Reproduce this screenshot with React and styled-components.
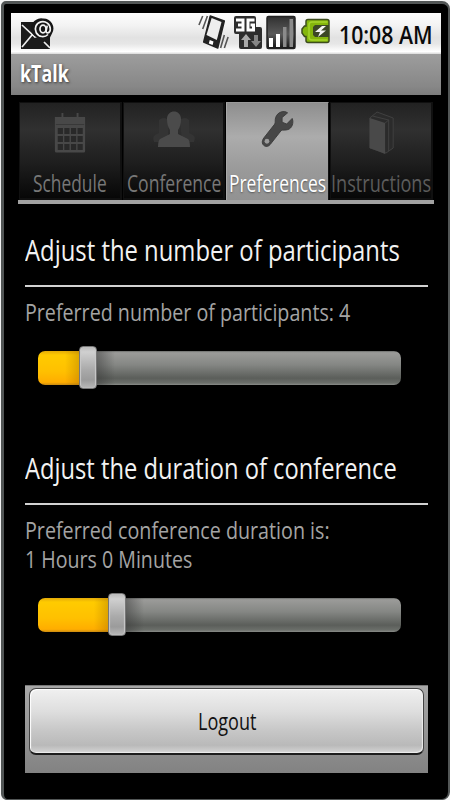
import React, { useLayoutEffect, useRef } from "react";
import styled, { createGlobalStyle, css } from "styled-components";

const GlobalStyle = createGlobalStyle`
  *, *::before, *::after { box-sizing: border-box; }
  body { margin: 0; background: #fff; font-family: "Open Sans", "Noto Sans", sans-serif; }
  svg { display: block; flex: none; }
  h1, h2, p { margin: 0; font-weight: 400; }
`;

const Device = styled.div`
  width: 450px;
  height: 800px;
  padding: 1px 0 0 1px;
  background: #f4f4f4;
`;

const Bezel = styled.div`
  width: 449px;
  height: 799px;
  padding: 9px 6px 0 7px;
  background: #000;
  border: solid #525656;
  border-width: 3px 2px 1px 3px;
  border-radius: 5px 8px 8px 6px;
  overflow: hidden;
`;

const Screen = styled.div`
  display: flex;
  flex-direction: column;
  width: 430px;
`;

const StatusBar = styled.header`
  display: flex;
  align-items: flex-start;
  height: 41px;
  padding-left: 9px;
  background: linear-gradient(#fdfdfd 0%, #f3f3f3 30%, #e2e2e2 60%, #e6e6e6 75%, #fff 94%, #d8d8d8 100%);
`;

const StatusIcons = styled.div`
  display: flex;
  align-items: flex-start;
  gap: 3px;
  margin-left: auto;
  padding-top: 1px;
`;

const TitleBar = styled.div`
  height: 41px;
  padding: 4px 0 0 9px;
  background: linear-gradient(#9d9d9d, #878787 80%, #7c7c7c);
  text-shadow: 1px 1px 3px #333;
`;

const TextBox = styled.span`
  display: block;
  width: ${(p) => p.$width}px;
  height: ${(p) => p.$line}px;
  line-height: ${(p) => p.$line}px;
  font-size: ${(p) => p.$size}px;
  font-weight: ${(p) => p.$weight || 400};
  color: ${(p) => p.$color};
  white-space: nowrap;
`;

const TextInner = styled.span`
  display: inline-block;
  transform-origin: left center;
`;

function CondensedText({ width, line = 30, size, weight, color, children }) {
  const ref = useRef(null);
  useLayoutEffect(() => {
    ref.current.style.transform = `scaleX(${width / ref.current.offsetWidth})`;
  }, [width, children]);
  return (
    <TextBox $width={width} $line={line} $size={size} $weight={weight} $color={color}>
      <TextInner ref={ref}>{children}</TextInner>
    </TextBox>
  );
}

const Clock = styled.div`
  padding: 5px 8px 0 9px;
`;

const Tabs = styled.nav`
  display: grid;
  grid-template-columns: 103px 102px 103px 103px;
  column-gap: 1px;
  width: 416px;
  height: 102px;
  margin: 7px 0 0 7px;
  padding-left: 1px;
  border-bottom: 4px solid #a2a2a2;
`;

const Tab = styled.div`
  display: flex;
  flex-direction: column;
  align-items: center;
  justify-content: space-between;
  min-width: 0;
  height: 98px;
  padding: 8px 0 0;
  border: solid #101010;
  border-width: 1px 2px 2px 1px;
  background: linear-gradient(#222 0%, #303030 28%, #1d1d1d 65%, #070707 100%);
  ${(p) =>
    p.$active &&
    css`
      border-color: #999 #111 #929292 #aaa;
      border-width: 1px 1px 0 1px;
      padding-bottom: 2px;
      background: linear-gradient(#8e8e8e, #acacac 35%, #999 70%, #929292);
      text-shadow: 0 1px 2px #555;
    `}
`;

const Settings = styled.main`
  display: flex;
  flex-direction: column;
  width: 403px;
  margin: 28px 0 0 14px;
`;

const Section = styled.section`
  height: ${(p) => p.$height}px;
`;

const SectionTitle = styled.h2`
  height: 55px;
  border-bottom: 2px solid #d2d2d2;
`;

const Description = styled.p`
  height: ${(p) => p.$height}px;
  padding-top: 11px;
`;

const Slider = styled.div`
  display: flex;
  align-items: center;
  width: 363px;
  height: 43px;
  margin-left: 13px;
`;

const Fill = styled.div`
  width: ${(p) => p.$width}px;
  height: 34px;
  border-radius: 7px 0 0 7px;
  background:
    linear-gradient(90deg, transparent calc(100% - 14px), #9a650055),
    linear-gradient(#e4ab08, #ffcb00 12%, #ffc000 60%, #ffad00 92%, #c98b12);
`;

const Thumb = styled.div`
  flex: none;
  width: 18px;
  height: 43px;
  border: 1px solid #777;
  border-radius: 4px;
  background: linear-gradient(#b9b9b9, #d0d0d0 12%, #aaa 55%, #9b9b9b 80%, #b8b8b8);
  box-shadow: inset 1px 0 1px #c9c9c9, inset -1px 0 1px #c9c9c9;
`;

const Track = styled.div`
  flex: 1;
  height: 34px;
  border-radius: 0 7px 7px 0;
  background:
    linear-gradient(90deg, #3337, transparent 18px),
    linear-gradient(#6b6d6b, #9b9b99 5%, #858784 40%, #5b5e5a 80%, #6b6f6a 94%, #8a8c89);
`;

const Footer = styled.footer`
  height: 88px;
  padding: 2px 4px;
  border-top: 1px solid #777;
  background: linear-gradient(#a8a8a8, #929292 60%, #828282);
`;

const Button = styled.button`
  display: flex;
  align-items: center;
  justify-content: center;
  width: 395px;
  height: 67px;
  padding: 0 0 1px 1px;
  border: 1px solid #444;
  border-bottom: 2px solid #1d1d1d;
  border-radius: 7px;
  background: linear-gradient(#f0f0f0, #dedede 35%, #c7c7c7 65%, #b9b9b9 88%, #d5d5d5);
  box-shadow: inset 1px 1px 1px #fff, inset -1px -1px 1px #eee;
  font-family: inherit;
`;

const MailIcon = styled.svg.attrs({ width: 34, height: 34, viewBox: "0 0 34 34" })`
  margin-top: 5px;
`;

function VoicemailMail() {
  return (
    <MailIcon>
      <rect x="1" y="4" width="29" height="27" fill="#1b1b1b" />
      <path d="M2 7l13 12 6-2M2 29l10-12M24 24l6 6" fill="none" stroke="#eee" strokeWidth="1.7" />
      <path d="M23 .5a10 10 0 0 1 9 15l-3 6-4-2A10 10 0 1 1 23 .5z" fill="#161616" />
      <g fill="none" stroke="#f3f3f3" strokeWidth="1.7">
        <path d="M28 16.500a7.500 7.500 0 1 1 2.300-5.400c0 5-5 4.600-4.100 1.500l1-5" />
        <ellipse cx="23" cy="11" rx="3" ry="3.800" />
      </g>
    </MailIcon>
  );
}

function VibrateIcon() {
  return (
    <svg width="32" height="36" viewBox="0 0 34 36" preserveAspectRatio="none">
      <path d="M5 2L1 11M10 2L5 15M28 21l-4 13M32 23l-4 11" stroke="#555" strokeWidth="1.7" />
      <path d="M13 2l15 5-7 27-15-6z" fill="#222" stroke="#222" strokeWidth="1.5" strokeLinejoin="round" />
      <path d="M14.500 4l10.500 4-5 18-11-5z" fill="#eee" />
      <path d="M12.500 26l4 1.500-1 3.500-4-1.500z" fill="#fff" />
    </svg>
  );
}

function NetworkIcon() {
  return (
    <svg width="30" height="36" viewBox="0 0 30 36">
      <path d="M3 2h18a2 2 0 0 1 2 2v9h4a2 2 0 0 1 2 2v18a2 2 0 0 1-2 2H8a2 2 0 0 1-2-2V20H3a2 2 0 0 1-2-2V4a2 2 0 0 1 2-2z" fill="#2d2d2d" />
      <path d="M3 6h7v10H3M5 11h5M21.500 6H15v10h5.500v-5h-3" fill="none" stroke="#fff" strokeWidth="3" />
      <path d="M13 20l5 6h-3v7h-4v-7H8z" fill="#aaa" />
      <path d="M23 33l-5-6h3v-6h4v6h3z" fill="#858585" />
    </svg>
  );
}

function SignalIcon() {
  return (
    <svg width="30" height="36" viewBox="0 0 30 36">
      <defs>
        <linearGradient id="signalBg" x2="0" y2="1">
          <stop stopColor="#303030" />
          <stop offset=".55" stopColor="#5a5a5a" />
          <stop offset="1" stopColor="#161616" />
        </linearGradient>
      </defs>
      <rect x="1" y="2.500" width="28" height="32" rx="1.500" fill="url(#signalBg)" stroke="#222" strokeWidth="1.500" />
      <path d="M3 24h4v9H3zM10 20h4v13h-4z" fill="#fff" />
      <path d="M17 13h3.500v20H17zM23.500 5H27v28h-3.500z" fill="#8b8b8b" />
    </svg>
  );
}

const Battery = styled.svg.attrs({ width: 29, height: 30, viewBox: "0 0 29 30" })`
  margin: 1px 0 0 2px;
`;

function BatteryIcon() {
  return (
    <Battery>
      <path d="M7 4.500h19a2 2 0 0 1 2 2v19a2 2 0 0 1-2 2H7a2 2 0 0 1-2-2v-4H3.500L1 18v-4l2.500-3H5V6.500a2 2 0 0 1 2-2z" fill="#84b60c" stroke="#3c4c1c" strokeWidth="1.500" />
      <path d="M26.500 7H11a3 3 0 0 0-3 3v12a3 3 0 0 0 3 3h15.500" fill="none" stroke="#a5d52b" strokeWidth="1.500" />
      <path d="M14 10h14v12H14l-2-2v-8z" fill="#3c4825" />
      <path d="M21 11l-7 6h5l-2 5 8-6.500h-5l5-4.500z" fill="#f4f4f4" />
    </Battery>
  );
}

function CalendarIcon() {
  return (
    <svg width="34" height="44" viewBox="0 0 36 44" preserveAspectRatio="none">
      <path d="M2 6h7V2h2v4h14V2h2v4h7v9H2zM2 15h32v25a1.500 1.500 0 0 1-1.500 1.500h-29A1.500 1.500 0 0 1 2 40z" fill="#484848" />
      <g fill="#292929">
        {[17, 25, 33].map((y) =>
          [5, 12, 19, 26].map((x) => <rect key={`${x}-${y}`} x={x} y={y} width="5.500" height="6" />)
        )}
      </g>
      <path d="M3 13.500h30" stroke="#383838" strokeWidth="1" />
    </svg>
  );
}

function PeopleIcon() {
  return (
    <svg width="44" height="44" viewBox="0 0 44 44">
      <g fill="#343434">
        <path d="M7 9q5-4 9 0v16l-2 3v3H2q-2-5 1-7l4-2z" />
        <path d="M28 9q5-4 9 0v13l4 2q3 2 1 7H30z" />
      </g>
      <path d="M15 8c0-10 14-10 14 0 0 5-1 8-3 11v4l10 5q2 2 2 8H6q0-6 2-8l10-5v-4c-2-3-3-6-3-11z" fill="#4b4b4b" />
    </svg>
  );
}

function WrenchIcon() {
  return (
    <svg width="33" height="41" viewBox="0 0 36 44" preserveAspectRatio="none">
      <path d="M29 2c-4-3-11-1-13 5-1 3 0 5-1 7L3 29c-5 7 3 12 7 7l12-15c2-1 4 0 7-1 5-1 7-8 5-12l-6 6-5-2 0-5z" fill="#474747" stroke="#3c3c3c" />
      <circle cx="6.500" cy="32.500" r="2.600" fill="#9b9b9b" />
    </svg>
  );
}

function BookIcon() {
  return (
    <svg width="27" height="44" viewBox="0 0 30 44" preserveAspectRatio="none">
      <path d="M2 7L10 1l18 6v30l-8 5L2 37z" fill="#2b2b2b" stroke="#414141" />
      <path d="M2 7l17 5v31L2 37z" fill="#494949" />
      <path d="M19 12l4-3v31M5 5l18 4" fill="none" stroke="#414141" />
    </svg>
  );
}

const TABS = [
  { label: "Schedule", width: 74, Icon: CalendarIcon, color: "#777" },
  { label: "Conference", width: 94, Icon: PeopleIcon, color: "#777" },
  { label: "Preferences", width: 97, Icon: WrenchIcon, color: "#fff", active: true },
  { label: "Instructions", width: 100, Icon: BookIcon, color: "#5c5c5c" },
];

export default function App() {
  return (
    <Device>
      <GlobalStyle />
      <Bezel>
        <Screen>
          <StatusBar>
            <VoicemailMail />
            <StatusIcons>
              <VibrateIcon />
              <NetworkIcon />
              <SignalIcon />
              <BatteryIcon />
            </StatusIcons>
            <Clock>
              <CondensedText width={94} line={32} size={26} weight={600} color="#0a0a0a">10:08 AM</CondensedText>
            </Clock>
          </StatusBar>
          <TitleBar>
            <CondensedText width={49} size={23} weight={700} color="#fff">kTalk</CondensedText>
          </TitleBar>
          <Tabs>
            {TABS.map(({ label, width, Icon, color, active }) => (
              <Tab key={label} $active={active}>
                <Icon />
                <CondensedText width={width} size={23} color={color}>{label}</CondensedText>
              </Tab>
            ))}
          </Tabs>
          <Settings>
            <Section $height={218}>
              <SectionTitle>
                <CondensedText width={375} line={36} size={29} color="#f2f2f2">Adjust the number of participants</CondensedText>
              </SectionTitle>
              <Description $height={59}>
                <CondensedText width={325} line={29} size={23} color="#a4a4a4">Preferred number of participants: 4</CondensedText>
              </Description>
              <Slider>
                <Fill $width={41} />
                <Thumb />
                <Track />
              </Slider>
            </Section>
            <Section $height={235}>
              <SectionTitle>
                <CondensedText width={372} line={36} size={29} color="#f2f2f2">Adjust the duration of conference</CondensedText>
              </SectionTitle>
              <Description $height={88}>
                <CondensedText width={305} line={29} size={23} color="#a4a4a4">Preferred conference duration is:</CondensedText>
                <CondensedText width={167} line={29} size={23} color="#a4a4a4">1 Hours 0 Minutes</CondensedText>
              </Description>
              <Slider>
                <Fill $width={70} />
                <Thumb />
                <Track />
              </Slider>
            </Section>
            <Footer>
              <Button>
                <CondensedText width={58} size={23} color="#111">Logout</CondensedText>
              </Button>
            </Footer>
          </Settings>
        </Screen>
      </Bezel>
    </Device>
  );
}
